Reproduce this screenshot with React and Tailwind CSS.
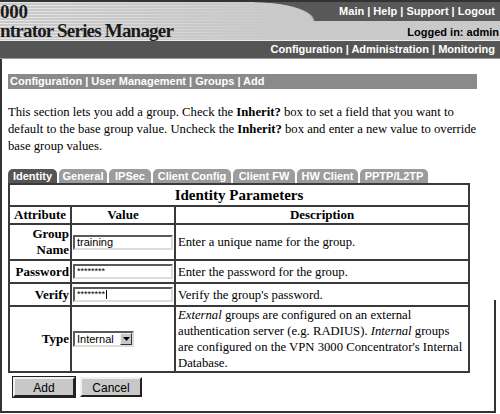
import React from 'react';

const sans = "font-['Liberation_Sans',Arial,sans-serif]";
const serif = "font-['Liberation_Serif','Times_New_Roman',serif]";

const tabs = [
  { label: 'Identity', w: 'w-[49px]', active: true },
  { label: 'General', w: 'w-[48px]' },
  { label: 'IPSec', w: 'w-[42px]' },
  { label: 'Client Config', w: 'w-[78px]' },
  { label: 'Client FW', w: 'w-[62px]' },
  { label: 'HW Client', w: 'w-[61px]' },
  { label: 'PPTP/L2TP', w: 'w-[68px]' },
];

const cell = 'border-2 border-[#3a3a3a]';

// sunken text box like an old-school <input>
const Field = ({ children, className = '' }) => (
  <div
    className={`w-[100px] h-[15px] bg-white border-2 border-t-[#5a5a5a] border-l-[#5a5a5a] border-b-[#dcdcdc] border-r-[#dcdcdc] pl-[2px] overflow-hidden flex items-center ${sans} text-[11px] leading-[11px] text-black ${className}`}
  >
    {children}
  </div>
);

export default function App() {
  return (
    <div className="w-[500px] h-[414px] overflow-hidden bg-white">
      {/* Header */}
      <header className="bg-[#c9c9c9] bg-[linear-gradient(to_right,rgba(201,201,201,0)_0px,#c9c9c9_290px),repeating-linear-gradient(to_bottom,#e8e8e8_0px,#e8e8e8_1px,#c9c9c9_1px,#c9c9c9_3px)] border-t-2 border-[#333]">
        <div className="flex h-[19px]">
          <div className={`flex-1 ${serif} text-[19px] font-bold leading-[19px] text-[#1a1a1a] tracking-[-0.3px]`}>
            000
          </div>
          <div className="w-[60px] bg-[radial-gradient(60px_19px_at_0_100%,transparent_96%,#585858_100%)]" />
          <nav className={`w-[185px] bg-[#585858] flex items-center justify-end pr-[5px] text-white font-bold text-[11px] leading-[11px] ${sans}`}>
            Main | Help | Support | Logout
          </nav>
        </div>
        <div className="flex h-[19px] items-end justify-between leading-[19px]">
          <div className={`${serif} text-[19px] font-bold leading-[19px] text-[#1a1a1a] tracking-[-0.8px]`}>ntrator Series Manager</div>
          <div className={`${sans} text-[11px] font-bold leading-[16px] text-black pr-[1px]`}>Logged in: admin</div>
        </div>
      </header>
      <div className={`h-[19px] bg-[#555] border-t border-[#ececec] border-b border-b-[#9a9a9a] flex items-center justify-end pr-[5px] text-white font-bold text-[11px] ${sans}`}>
        Configuration | Administration | Monitoring
      </div>

      {/* Body frame */}
      <div className="relative w-[496px] h-[354px] border-l-2 border-b-2 border-[#333] pl-[6px] pt-[15px]">
        <div className="absolute right-0 top-[241px] bottom-0 w-[2px] bg-[#333]" />

        <div className={`w-[469px] h-[15px] bg-[#8a8a8a] pl-[2px] text-white font-bold text-[11px] leading-[15px] ${sans}`}>
          Configuration | User Management | Groups | Add
        </div>

        <p className={`mt-[15px] ${serif} text-[12.7px] leading-[17px] text-black whitespace-nowrap`}>
          This section lets you add a group. Check the <b>Inherit?</b> box to set a field that you want to
          <br />
          default to the base group value. Uncheck the <b>Inherit?</b> box and enter a new value to override
          <br />
          base group values.
        </p>

        <div className="mt-[14px] flex gap-[2px] h-[14px]">
          {tabs.map((t) => (
            <div
              key={t.label}
              className={`${t.w} rounded-t-[5px] text-center text-white font-bold text-[11px] leading-[14px] ${sans} ${t.active ? 'bg-[#555]' : 'bg-[#9c9c9c]'}`}
            >
              {t.label}
            </div>
          ))}
        </div>

        <table className={`w-[460px] table-fixed border-collapse ${serif} text-[12.7px] leading-[16px] text-black`}>
          <colgroup>
            <col className="w-[62px]" />
            <col className="w-[104px]" />
            <col className="w-[294px]" />
          </colgroup>
          <tbody>
            <tr className="h-[22px]">
              <td colSpan={3} className={`${cell} text-center font-bold text-[15px] leading-[18px]`}>Identity Parameters</td>
            </tr>
            <tr className="h-[18px] font-bold text-[13px]">
              <td className={`${cell} text-center leading-[14px]`}>Attribute</td>
              <td className={`${cell} text-center leading-[14px]`}>Value</td>
              <td className={`${cell} text-center leading-[14px]`}>Description</td>
            </tr>
            <tr className="h-[36px]">
              <td className={`${cell} text-right font-bold text-[13px] leading-[16px] pr-[1px]`}>Group<br />Name</td>
              <td className={`${cell} pl-[1px]`}><Field>training</Field></td>
              <td className={`${cell} pl-[2px]`}>Enter a unique name for the group.</td>
            </tr>
            <tr className="h-[23px]">
              <td className={`${cell} text-right font-bold text-[13px] pr-[1px]`}>Password</td>
              <td className={`${cell} pl-[1px]`}><Field className="items-start"><span className="text-[9px] leading-[10px]">********</span></Field></td>
              <td className={`${cell} pl-[2px]`}>Enter the password for the group.</td>
            </tr>
            <tr className="h-[23px]">
              <td className={`${cell} text-right font-bold text-[13px] pr-[1px]`}>Verify</td>
              <td className={`${cell} pl-[1px]`}>
                <Field className="items-start">
                  <span className="text-[9px] leading-[10px]">********</span>
                  <span className="ml-[1px] mt-[1px] w-[1px] h-[9px] bg-black" />
                </Field>
              </td>
              <td className={`${cell} pl-[2px]`}>Verify the group's password.</td>
            </tr>
            <tr className="h-[66px]">
              <td className={`${cell} text-right font-bold text-[13px] pr-[1px]`}>Type</td>
              <td className={`${cell} pl-[1px]`}>
                <div className="w-[61px] h-[16px] bg-white border-2 border-t-[#5a5a5a] border-l-[#5a5a5a] border-b-[#dcdcdc] border-r-[#dcdcdc] flex items-center justify-between">
                  <span className={`${sans} text-[11px] leading-[11px] pl-[2px]`}>Internal</span>
                  <span className="w-[12px] h-[12px] bg-[#c8c8c8] border border-t-[#f0f0f0] border-l-[#f0f0f0] border-b-[#333] border-r-[#333] flex items-center justify-center">
                    <svg width="7" height="4" viewBox="0 0 7 4"><polygon points="0,0 7,0 3.5,4" fill="#000" /></svg>
                  </span>
                </div>
              </td>
              <td className={`${cell} pl-[2px] leading-[16px]`}>
                <i>External</i> groups are configured on an external
                <br />
                authentication server (e.g. RADIUS). <i>Internal</i> groups
                <br />
                are configured on the VPN 3000 Concentrator's Internal
                <br />
                Database.
              </td>
            </tr>
          </tbody>
        </table>

        <div className="mt-[4px] ml-[5px] flex gap-[5px]">
          <button className={`w-[62px] h-[20px] bg-[#c8c8c8] border-2 border-t-[#f0f0f0] border-l-[#f0f0f0] border-b-[#222] border-r-[#222] outline outline-1 outline-[#222] ${sans} text-[12px] text-black`}>
            Add
          </button>
          <button className={`w-[62px] h-[20px] bg-[#c8c8c8] border-2 border-t-[#f0f0f0] border-l-[#f0f0f0] border-b-[#222] border-r-[#222] ${sans} text-[12px] text-black`}>
            Cancel
          </button>
        </div>
      </div>
    </div>
  );
}
